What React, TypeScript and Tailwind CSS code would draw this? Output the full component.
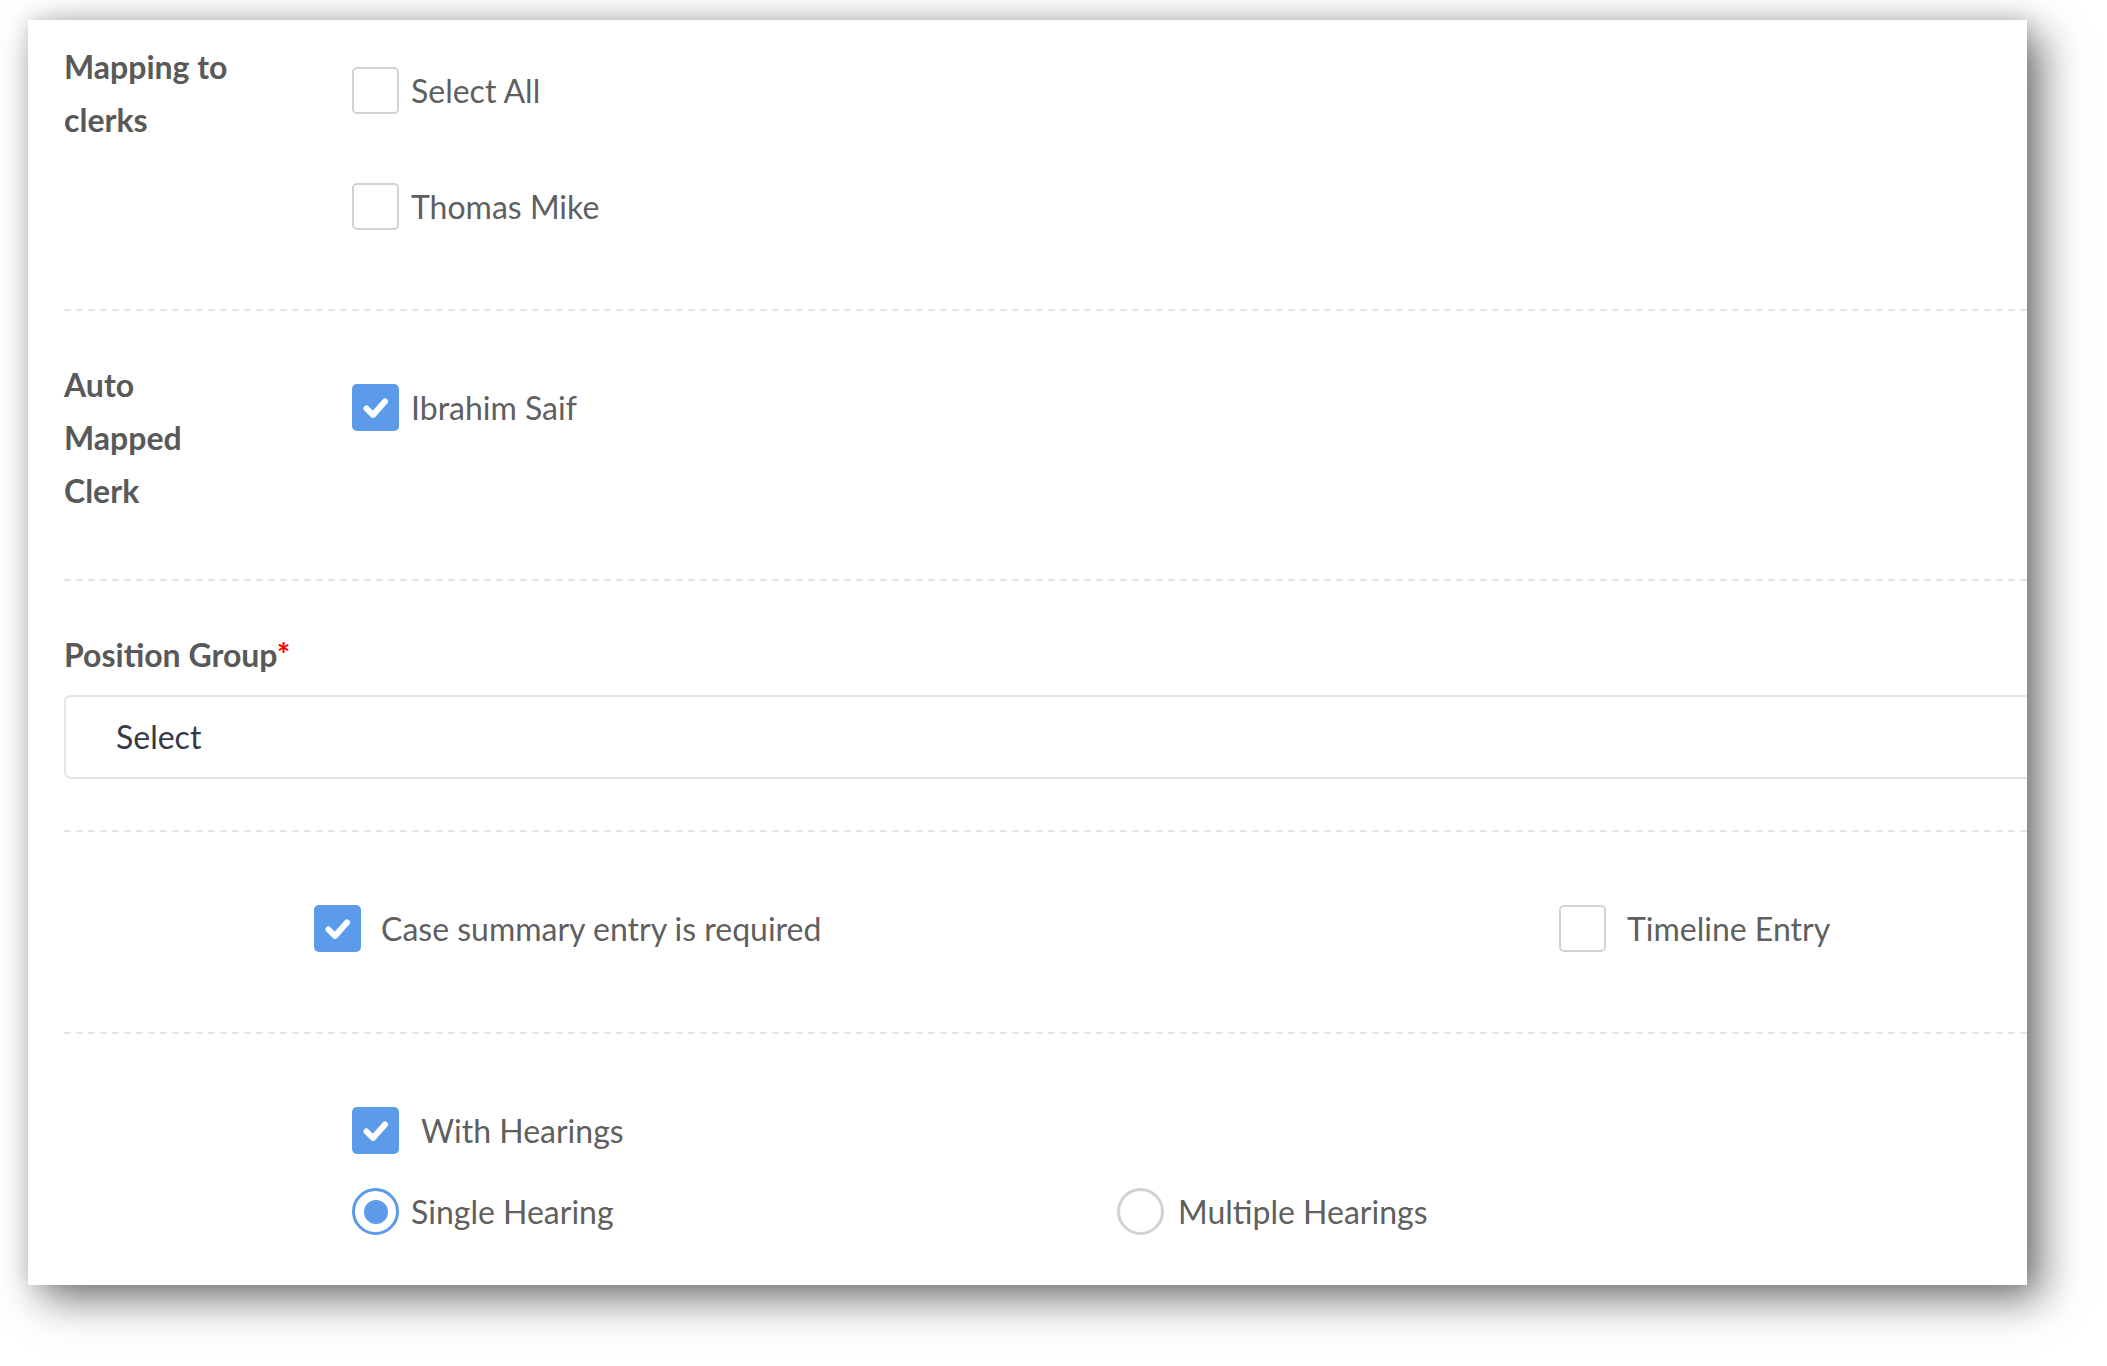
import React from 'react'

const font = { fontFamily: 'Lato, "Open Sans", sans-serif' }

function Dashed() {
  return (
    <div className="h-[2px] w-full bg-[linear-gradient(to_right,#e6e6e6_7px,transparent_7px)] bg-size-[12px_2px] bg-repeat-x" />
  )
}

function Box({ checked }: { checked?: boolean }) {
  if (checked) {
    return (
      <span className="flex h-[47px] w-[47px] shrink-0 items-center justify-center rounded-[5px] bg-[#5b9bea]">
        <svg width="47" height="47" viewBox="0 0 47 47">
          <path d="M14.5 24.5l6.5 6.5 12-13.5" fill="none" stroke="#fff" strokeWidth="6" strokeLinecap="round" strokeLinejoin="round" />
        </svg>
      </span>
    )
  }
  return <span className="h-[47px] w-[47px] shrink-0 rounded-[5px] border-2 border-[#d2d2d2] bg-white" />
}

function Radio({ checked }: { checked?: boolean }) {
  return checked ? (
    <span className="flex h-[47px] w-[47px] shrink-0 items-center justify-center rounded-full border-[3px] border-[#5b9bea] bg-white">
      <span className="h-[24px] w-[24px] rounded-full bg-[#5b9bea]" />
    </span>
  ) : (
    <span className="h-[47px] w-[47px] shrink-0 rounded-full border-[3px] border-[#d2d2d2] bg-white" />
  )
}

function Option({ children, checked, gap = 'gap-[12px]' }: { children: React.ReactNode; checked?: boolean; gap?: string }) {
  return (
    <label className={`flex items-center ${gap}`}>
      <Box checked={checked} />
      <span className="text-[32px] leading-none text-[#5f5f5f]">{children}</span>
    </label>
  )
}

const labelCls = 'w-[288px] shrink-0 text-[32px] font-bold leading-[53px] text-[#595959]'

export default function App() {
  return (
    <div className="min-h-screen bg-white pt-[20px] pl-[28px]" style={font}>
      <div className="h-[1265px] w-[1999px] overflow-hidden bg-white shadow-[0_-2px_18px_rgba(0,0,0,0.12),14px_14px_40px_rgba(0,0,0,0.55)]">
        <div className="-mr-4 pl-[36px]">
          {/* mapping to clerks */}
          <section className="flex pb-[79px]">
            <div className={`${labelCls} pt-[20px]`}>
              Mapping to
              <br />
              clerks
            </div>
            <div className="flex flex-col gap-[69px] pt-[47px]">
              <Option>Select All</Option>
              <Option>Thomas Mike</Option>
            </div>
          </section>
          <Dashed />

          <section className="flex pb-[62px]">
            <div className={`${labelCls} pt-[47px]`}>
              Auto
              <br />
              Mapped
              <br />
              Clerk
            </div>
            <div className="pt-[73px]">
              <Option checked>Ibrahim Saif</Option>
            </div>
          </section>
          <Dashed />

          <section className="pt-[47px] pb-[51px]">
            <div className="text-[32px] font-bold leading-[53px] text-[#595959]">
              Position Group<span className="text-[#ff0000]">*</span>
            </div>
            <div className="mt-[14px] flex h-[84px] items-center rounded-[7px] border-2 border-[#dfe6ea] pl-[50px] text-[32px] text-[#333a48]">
              Select
            </div>
          </section>
          <Dashed />

          <section className="flex pt-[73px] pb-[80px] pl-[250px]">
            <div className="w-[1245px]">
              <Option checked gap="gap-[20px]">Case summary entry is required</Option>
            </div>
            <Option gap="gap-[21px]">Timeline Entry</Option>
          </section>
          <Dashed />

          <section className="flex flex-col gap-[34px] pt-[73px] pl-[288px]">
            <Option checked gap="gap-[22px]">With Hearings</Option>
            <div className="flex">
              <label className="flex w-[765px] items-center gap-[12px]">
                <Radio checked />
                <span className="text-[32px] leading-none text-[#5f5f5f]">Single Hearing</span>
              </label>
              <label className="flex items-center gap-[14px]">
                <Radio />
                <span className="text-[32px] leading-none text-[#5f5f5f]">Multiple Hearings</span>
              </label>
            </div>
          </section>
        </div>
      </div>
    </div>
  )
}
